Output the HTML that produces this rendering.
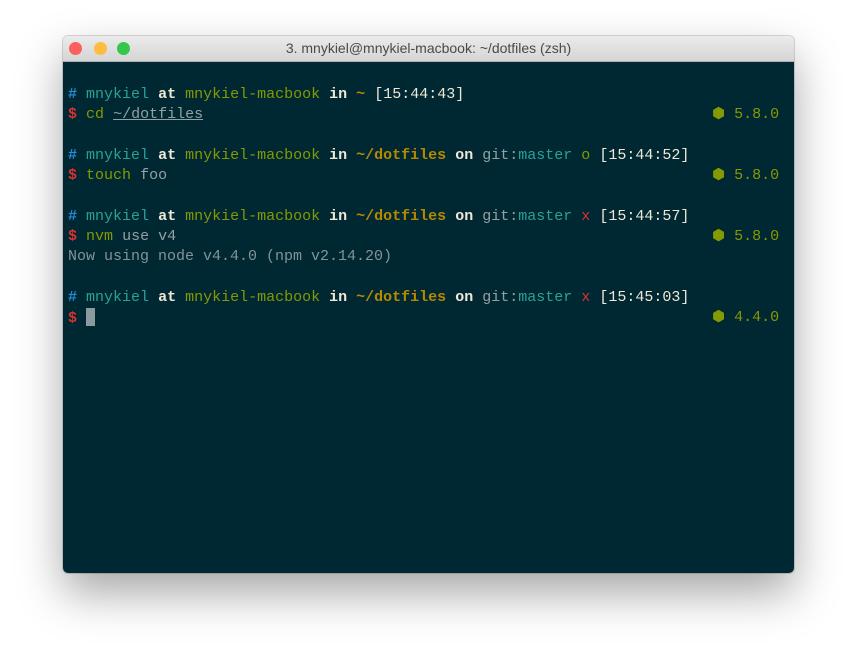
<!DOCTYPE html>
<html><head><style>
body{margin:0;width:857px;height:663px;background:#fff;position:relative;overflow:hidden;font-family:"Liberation Sans",sans-serif}
.win{position:absolute;left:63px;top:36px;width:731px;height:537px;border-radius:5px;overflow:hidden;box-shadow:0 20px 45px rgba(0,0,0,.35),0 0 0 1px rgba(0,0,0,.15)}
.tb{height:25px;background:linear-gradient(#ebebeb,#d5d5d5);border-bottom:1px solid #b0b0b0;position:relative;text-align:center;font-size:14px;line-height:25px;color:#4a4a4a}
.d{position:absolute;top:6px;width:13px;height:13px;border-radius:50%}
.term{position:absolute;top:26px;left:0;right:0;bottom:0;background:#002833;font-family:"Liberation Mono",monospace;font-size:15px;line-height:20.25px;padding:23px 0 0 5px;color:#839496;white-space:pre}
.l{height:20.25px;position:relative}
.r{position:absolute;left:644px;top:0;color:#859900}
.b{color:#268bd2;font-weight:bold}.c{color:#2aa198}.w{color:#eee8d5;font-weight:bold}.y{color:#859900}.o{color:#b58900;font-weight:bold}.red{color:#dc322f;font-weight:bold}.g{color:#93a1a1}.rx{color:#dc322f}.f{color:#93a1a1}
.cur{display:inline-block;width:9px;height:18px;background:#8a9a9e;vertical-align:-4px}
</style></head><body>
<div class="win">
<div class="tb"><span class="d" style="left:6px;background:#fc605c"></span><span class="d" style="left:31px;background:#fdbc40"></span><span class="d" style="left:54px;background:#34c84a"></span>3. mnykiel@mnykiel-macbook: ~/dotfiles (zsh)</div>
<div class="term"><div class="l"><span class="b">#</span> <span class="c">mnykiel</span> <span class="w">at</span> <span class="y">mnykiel-macbook</span> <span class="w">in</span> <span class="o">~</span> <span class="w" style="font-weight:normal">[15:44:43]</span></div><div class="l"><span class="red">$</span> <span class="y">cd</span> <span class="f" style="text-decoration:underline">~/dotfiles</span><span class="r">⬢ 5.8.0</span></div><div class="l"></div><div class="l"><span class="b">#</span> <span class="c">mnykiel</span> <span class="w">at</span> <span class="y">mnykiel-macbook</span> <span class="w">in</span> <span class="o">~/dotfiles</span> <span class="w">on</span> <span class="g">git:</span><span class="c">master</span> <span class="y">o</span> <span class="w" style="font-weight:normal">[15:44:52]</span></div><div class="l"><span class="red">$</span> <span class="y">touch</span> <span class="f">foo</span><span class="r">⬢ 5.8.0</span></div><div class="l"></div><div class="l"><span class="b">#</span> <span class="c">mnykiel</span> <span class="w">at</span> <span class="y">mnykiel-macbook</span> <span class="w">in</span> <span class="o">~/dotfiles</span> <span class="w">on</span> <span class="g">git:</span><span class="c">master</span> <span class="rx">x</span> <span class="w" style="font-weight:normal">[15:44:57]</span></div><div class="l"><span class="red">$</span> <span class="y">nvm</span> <span class="f">use v4</span><span class="r">⬢ 5.8.0</span></div><div class="l">Now using node v4.4.0 (npm v2.14.20)</div><div class="l"></div><div class="l"><span class="b">#</span> <span class="c">mnykiel</span> <span class="w">at</span> <span class="y">mnykiel-macbook</span> <span class="w">in</span> <span class="o">~/dotfiles</span> <span class="w">on</span> <span class="g">git:</span><span class="c">master</span> <span class="rx">x</span> <span class="w" style="font-weight:normal">[15:45:03]</span></div><div class="l"><span class="red">$</span> <span class="cur"></span><span class="r">⬢ 4.4.0</span></div></div>
</div>
</body></html>
